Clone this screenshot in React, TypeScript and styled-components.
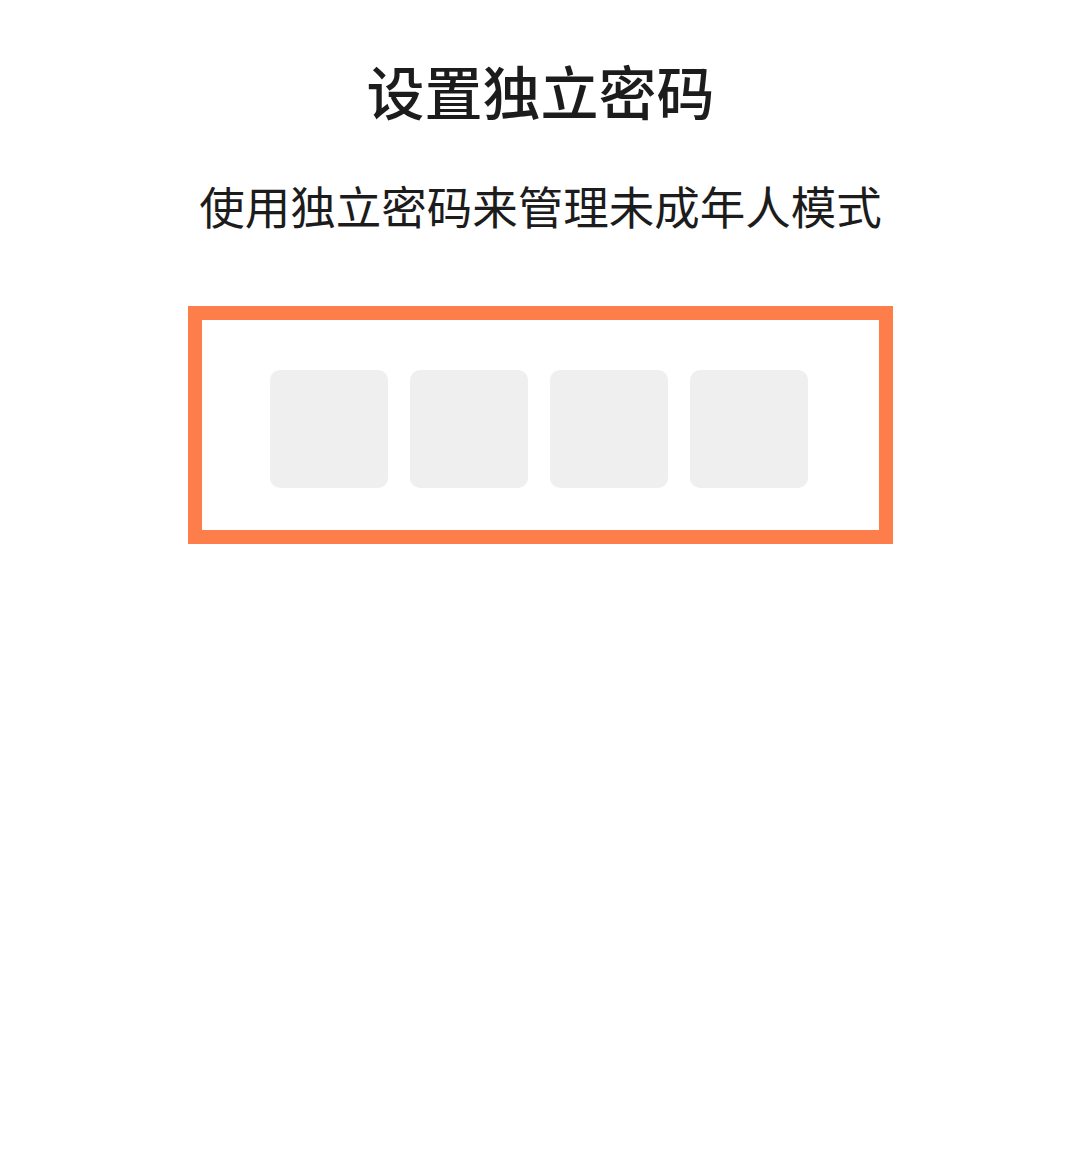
import { FC } from "react";
import styled, { createGlobalStyle } from "styled-components";

const GlobalStyle = createGlobalStyle`
  html, body {
    margin: 0;
    padding: 0;
    background: #ffffff;
  }
  body {
    font-family: "Noto Sans CJK SC", "Noto Sans", sans-serif;
    color: #1c1c1c;
  }
`;

const Page = styled.div`
  width: 1069px;
  min-height: 1167px;
  box-sizing: border-box;
  padding: 57px 0 0 12px;
  display: flex;
  flex-direction: column;
  align-items: center;
`;

const Title = styled.h1`
  margin: 0;
  font-size: 58px;
  line-height: 66px;
  font-weight: 500;
  letter-spacing: 0;
`;

const Subtitle = styled.p`
  margin: 54px 0 0;
  font-size: 45.5px;
  line-height: 56px;
  font-weight: 400;
`;

const Frame = styled.div`
  margin-top: 73px;
  width: 705px;
  height: 238px;
  box-sizing: border-box;
  border: 14px solid #fd7e4a;
  padding: 50px 71px 42px 68px;
`;

const CodeRow = styled.div`
  display: flex;
  gap: 22px;
`;

const CodeCell = styled.div`
  width: 118px;
  height: 118px;
  border-radius: 10px;
  background: #efefef;
`;

const App: FC = () => {
  const cells = [0, 1, 2, 3];
  return (
    <>
      <GlobalStyle />
      <Page>
        <Title>设置独立密码</Title>
        <Subtitle>使用独立密码来管理未成年人模式</Subtitle>
        <Frame>
          <CodeRow>
            {cells.map((i) => (
              <CodeCell key={i} />
            ))}
          </CodeRow>
        </Frame>
      </Page>
    </>
  );
};

export default App;
